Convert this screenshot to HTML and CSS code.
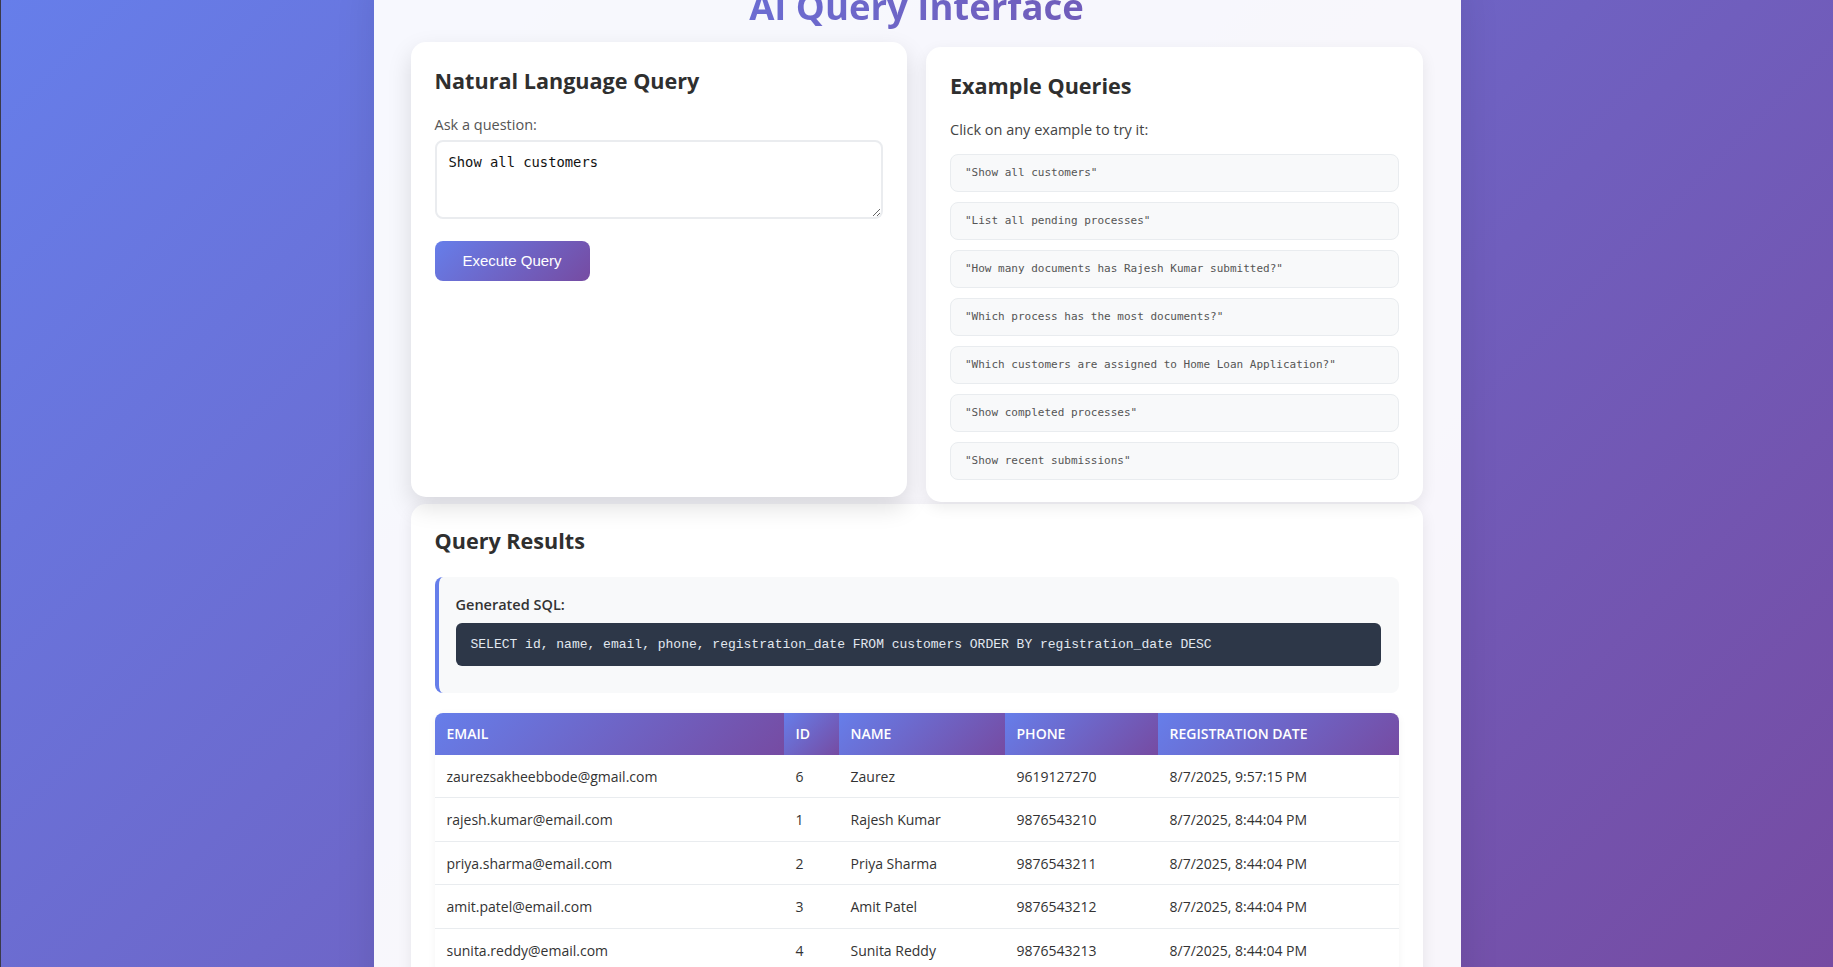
FILE: index.html
```html
<!DOCTYPE html>
<html lang="en">
<head>
<meta charset="utf-8">
<title>AI Query Interface</title>
<link rel="stylesheet" href="styles.css">
</head>
<body>
<div class="container">
  <h1 class="title">AI Query Interface</h1>

  <div class="top-grid">
    <section class="card card-lifted">
      <h3 class="card-title">Natural Language Query</h3>
      <label class="field-label" for="question">Ask a question:</label>
      <textarea id="question" class="query-input">Show all customers</textarea>
      <button class="btn-primary" type="button">Execute Query</button>
    </section>

    <section class="card">
      <h3 class="card-title">Example Queries</h3>
      <p class="hint">Click on any example to try it:</p>
      <div class="examples">
        <div class="example">"Show all customers"</div>
        <div class="example">"List all pending processes"</div>
        <div class="example">"How many documents has Rajesh Kumar submitted?"</div>
        <div class="example">"Which process has the most documents?"</div>
        <div class="example">"Which customers are assigned to Home Loan Application?"</div>
        <div class="example">"Show completed processes"</div>
        <div class="example">"Show recent submissions"</div>
      </div>
    </section>
  </div>

  <section class="card results">
    <h3 class="card-title">Query Results</h3>
    <div class="sql-box">
      <div class="sql-label">Generated SQL:</div>
      <pre class="sql-code">SELECT id, name, email, phone, registration_date FROM customers ORDER BY registration_date DESC</pre>
    </div>
    <div class="table-wrap">
      <table class="data-table">
        <colgroup>
          <col class="col-email">
          <col class="col-id">
          <col class="col-name">
          <col class="col-phone">
          <col class="col-date">
        </colgroup>
        <thead>
          <tr><th>Email</th><th>Id</th><th>Name</th><th>Phone</th><th>Registration Date</th></tr>
        </thead>
        <tbody>
          <tr><td>zaurezsakheebbode@gmail.com</td><td>6</td><td>Zaurez</td><td>9619127270</td><td>8/7/2025, 9:57:15 PM</td></tr>
          <tr><td>rajesh.kumar@email.com</td><td>1</td><td>Rajesh Kumar</td><td>9876543210</td><td>8/7/2025, 8:44:04 PM</td></tr>
          <tr><td>priya.sharma@email.com</td><td>2</td><td>Priya Sharma</td><td>9876543211</td><td>8/7/2025, 8:44:04 PM</td></tr>
          <tr><td>amit.patel@email.com</td><td>3</td><td>Amit Patel</td><td>9876543212</td><td>8/7/2025, 8:44:04 PM</td></tr>
          <tr><td>sunita.reddy@email.com</td><td>4</td><td>Sunita Reddy</td><td>9876543213</td><td>8/7/2025, 8:44:04 PM</td></tr>
        </tbody>
      </table>
    </div>
  </section>
</div>
</body>
</html>
```

FILE: styles.css
```css
* { box-sizing: border-box; }

html, body {
  margin: 0;
  padding: 0;
}

body {
  font-family: "Open Sans", "Noto Sans", sans-serif;
  color: #333;
  min-height: 100vh;
  background: linear-gradient(135deg, #667eea 0%, #764ba2 100%) fixed;
  border-left: 1px solid #3a3a4a;
  overflow: hidden;
}

.container {
  width: 1087px;
  margin: -45px auto 0;
  padding: 30px 38px 40px 37px;
  background: rgba(255, 255, 255, 0.95);
  border-radius: 20px;
  box-shadow: 0 20px 40px rgba(0, 0, 0, 0.1);
  min-height: 1100px;
}

.title {
  margin: 0 0 18px;
  font-size: 36.5px;
  font-weight: 700;
  line-height: 1.2;
  text-align: center;
  background: linear-gradient(135deg, #667eea 0%, #764ba2 100%);
  -webkit-background-clip: text;
  background-clip: text;
  color: transparent;
}

.top-grid {
  display: grid;
  grid-template-columns: 1fr 1fr;
  gap: 19px;
}

.card {
  background: #fff;
  border-radius: 15px;
  padding: 25px 24px 25px;
  box-shadow: 0 5px 15px rgba(0, 0, 0, 0.08);
}

.top-grid .card {
  padding-bottom: 22.5px;
}

.card-lifted {
  transform: translateY(-5px);
  box-shadow: 0 10px 25px rgba(0, 0, 0, 0.13);
}

.card-title {
  margin: 0 0 19px;
  font-size: 21.6px;
  line-height: 1.3;
  font-weight: 700;
  color: #2f2f2f;
}

.field-label {
  display: block;
  font-size: 14.5px;
  line-height: 1.5;
  font-weight: 500;
  color: #555;
  margin-bottom: 4px;
}

.query-input {
  display: block;
  width: 100%;
  height: 79px;
  margin: 0 0 22px;
  padding: 12px 12px;
  border: 2px solid #eaecef;
  border-radius: 8px;
  font-family: "DejaVu Sans Mono", "Liberation Mono", monospace;
  font-size: 13.8px;
  line-height: 1.3;
  color: #111;
  resize: vertical;
  outline: none;
}

.btn-primary {
  display: block;
  width: 155px;
  height: 40px;
  padding: 0;
  border: none;
  border-radius: 8px;
  background: linear-gradient(135deg, #667eea 0%, #764ba2 100%);
  color: #fff;
  font-family: "Liberation Sans", Arial, sans-serif;
  font-size: 15px;
  cursor: pointer;
}

.hint {
  margin: 0 0 13px;
  font-size: 14.5px;
  line-height: 1.5;
  color: #444;
}

.examples {
  display: flex;
  flex-direction: column;
  gap: 10px;
}

.example {
  padding: 11px 14px;
  background: #f8f9fa;
  border: 1px solid #e9ecef;
  border-radius: 8px;
  font-family: "DejaVu Sans Mono", "Liberation Mono", monospace;
  font-size: 11px;
  line-height: 14px;
  color: #555;
  cursor: pointer;
}

.results {
  margin-top: 2px;
  padding-top: 23px;
}

.results .card-title {
  margin-bottom: 22px;
}

.sql-box {
  background: #f8f9fa;
  border-left: 4px solid #667eea;
  border-radius: 8px;
  padding: 17px 18px 27px 17px;
  margin-bottom: 20px;
}

.sql-label {
  font-size: 14.5px;
  line-height: 1.5;
  font-weight: 600;
  color: #333;
  margin-bottom: 7px;
}

.sql-code {
  margin: 0;
  padding: 12px 15px;
  background: #2d3748;
  color: #e2e8f0;
  border-radius: 6px;
  font-family: "Liberation Mono", "Courier New", monospace;
  font-size: 13px;
  line-height: 19px;
  white-space: pre;
  overflow: hidden;
}

.table-wrap {
  border-radius: 8px;
  overflow: hidden;
  box-shadow: 0 2px 8px rgba(0, 0, 0, 0.05);
}

.data-table {
  width: 100%;
  border-collapse: collapse;
  table-layout: fixed;
}

.col-email { width: 349px; }
.col-id { width: 55px; }
.col-name { width: 166px; }
.col-phone { width: 153px; }

.data-table th {
  padding: 12px 12px;
  background: linear-gradient(135deg, #667eea 0%, #764ba2 100%);
  color: #fff;
  text-align: left;
  text-transform: uppercase;
  font-size: 14px;
  line-height: 18px;
  font-weight: 600;
}

.data-table td {
  padding: 13px 12px 11px;
  font-size: 14px;
  line-height: 18.5px;
  color: #333;
  background: #fff;
  border-bottom: 1px solid #e9ecef;
}
```
